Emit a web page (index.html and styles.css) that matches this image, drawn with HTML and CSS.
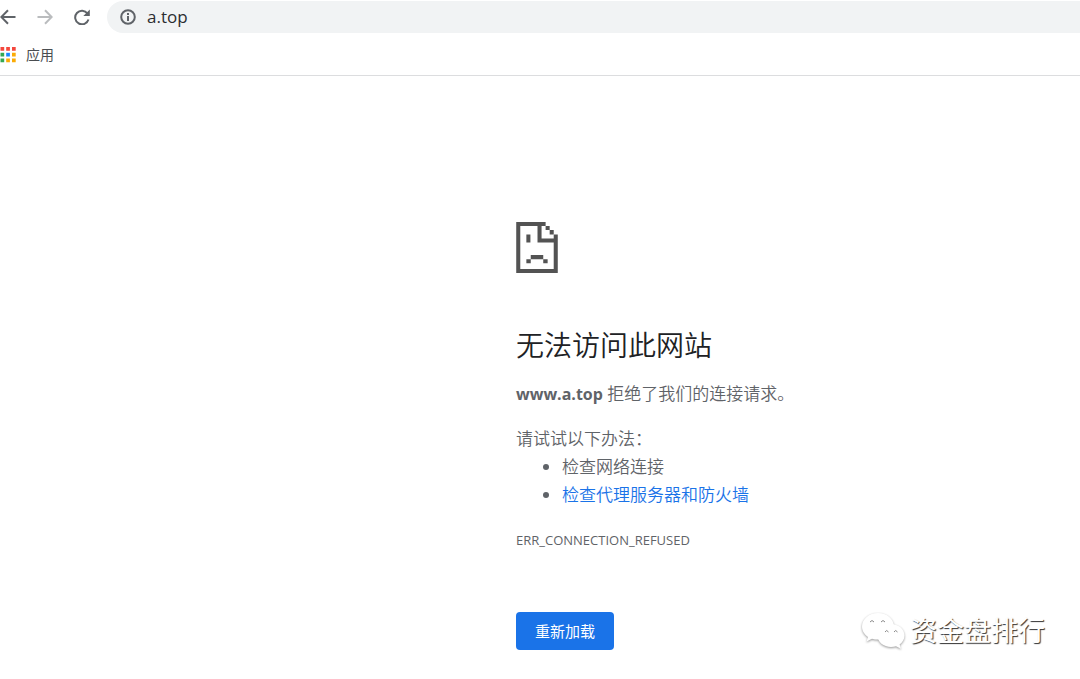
FILE: index.html
```html
<!DOCTYPE html>
<html lang="zh-CN">
<head>
<meta charset="utf-8">
<title>a.top</title>
<link rel="stylesheet" href="styles.css">
</head>
<body>
<header>
  <nav class="toolbar">
    <button class="tool back" type="button" aria-label="后退"><svg width="16" height="16" viewBox="0 0 16 16"><path d="M15.500 8H1.500M8 1.300 1.300 8 8 14.700"/></svg></button>
    <button class="tool forward" type="button" aria-label="前进"><svg width="16" height="16" viewBox="0 0 16 16"><path d="M.5 8h14M8 1.300 14.700 8 8 14.700"/></svg></button>
    <button class="tool" type="button" aria-label="刷新"><svg width="16" height="16" viewBox="0 0 16 16"><path d="M13.500 4.500A6.800 6.800 0 1 0 14.500 10.500"/><path class="solid" d="M15.800.6v6.500H9.300z"/></svg></button>
    <label class="address">
      <svg width="16" height="16" viewBox="0 0 16 16" aria-hidden="true"><circle cx="8" cy="8" r="6.800"/><path d="M8 7v5M8 4v2"/></svg>
      <input type="text" value="a.top" aria-label="地址栏">
    </label>
  </nav>
  <div class="bookmarks">
    <a class="apps" href="#">
      <svg width="16" height="16" viewBox="0 0 16 16" aria-hidden="true">
        <path fill="#f4473c" d="M.5 0h3.700v3.700H.5zM6.200 0h3.700v3.700H6.200zM12 0h3.700v3.700H12z"/>
        <path fill="#34a853" d="M.5 5.800h3.700v3.700H.5zM.5 11.600h3.700v3.700H.5z"/>
        <path fill="#1a88ff" d="M6.200 5.800h3.700v3.700H6.200z"/>
        <path fill="#fbab05" d="M12 5.800h3.700v3.700H12zM6.200 11.600h3.700v3.700H6.200zM12 11.600h3.700v3.700H12z"/>
      </svg>
      应用
    </a>
  </div>
</header>
<main>
  <svg class="sad" width="42" height="51" viewBox="0 0 123 151" aria-hidden="true">
    <path d="M0 0h87v12H75v37h36V37h12v114H0zM12 12v127h99V61H63V12z" fill-rule="evenodd"/>
    <path d="M87 12h12v12H87zM99 24h12v13H99zM30 37h12v24H30zM43 98h37v12H43zM30 110h13v12H30zM80 110h13v12H80z"/>
  </svg>
  <h1>无法访问此网站</h1>
  <p class="summary"><strong>www.a.top</strong> 拒绝了我们的连接请求。</p>
  <p class="hint">请试试以下办法：</p>
  <ul>
    <li>检查网络连接</li>
    <li><a href="#">检查代理服务器和防火墙</a></li>
  </ul>
  <p class="code">ERR_CONNECTION_REFUSED</p>
  <button class="reload" type="button">重新加载</button>
</main>
<aside class="watermark">
  <svg width="44" height="38" viewBox="0 0 44 38" aria-hidden="true">
    <path d="M17 1C8 1 1 7 1 14.500c0 4.500 2.500 8 6 10.500l-1.500 4.500 5.500-2.800c2 .6 4 .9 6 .9 9 0 16-5.500 16-13S26 1 17 1z"/>
    <path d="M30 12c-7.500 0-13.500 5-13.500 11.500S22.500 35 30 35c1.800 0 3.500-.3 5-.8l5 2.600-1.400-4.200c3-2.200 4.900-5.400 4.900-9.100C43.500 17 37.500 12 30 12z"/>
    <path class="eyes" d="M9 10q2-3 4 0M20 10q2-3 4 0M24 20q1.500-3 3.500 0M33 20q1.500-3 3.500 0"/>
  </svg>
  <span>资金盘排行</span>
</aside>
</body>
</html>
```
FILE: styles.css
```css
* { box-sizing: border-box; }
body {
  margin: 0;
  min-height: 100vh;
  position: relative;
  background: #fff;
  color: #5f6368;
  font-family: "Open Sans", "Noto Sans CJK SC", sans-serif;
  font-size: 17px;
  line-height: 28px;
}
header { border-bottom: 1px solid #dcdddf; }
.toolbar { display: flex; align-items: center; height: 34px; }
.tool {
  display: flex;
  width: 16px;
  height: 16px;
  margin-right: 21px;
  padding: 0;
  border: 0;
  background: none;
  color: #5f6368;
}
.tool svg, .address svg { fill: none; stroke: currentColor; stroke-width: 2; }
.tool .solid { fill: currentColor; stroke: none; }
.forward { color: #babcbe; }
.address {
  display: flex;
  flex: 1;
  align-items: center;
  gap: 11px;
  height: 32px;
  margin-left: -4px;
  padding-left: 13px;
  border-radius: 16px 0 0 16px;
  background: #f1f3f4;
}
.address input {
  flex: 1;
  min-width: 0;
  padding: 0;
  border: 0;
  outline: 0;
  background: none;
  color: #2b2d30;
  font: 17px/24px "Open Sans", sans-serif;
}
.bookmarks { display: flex; align-items: center; height: 41px; }
.apps {
  display: flex;
  align-items: center;
  gap: 10px;
  color: #4a4d51;
  font-size: 14px;
  text-decoration: none;
}
main { margin-left: 516px; padding-top: 146px; font-weight: 350; }
.sad { display: block; fill: #535353; }
h1 {
  margin: 51px 0 14px;
  color: #202124;
  font-size: 28px;
  font-weight: 350;
  line-height: 42px;
}
p { margin: 0; }
strong { font-size: 16px; font-weight: 700; }
.hint { margin-top: 17px; }
ul { margin: 0; padding-left: 46px; }
li a { color: #1a73e8; text-decoration: none; }
.code { margin-top: 17px; font-size: 13px; font-weight: 400; }
.reload {
  display: block;
  margin-top: 58px;
  padding: 8px 19px;
  border: 0;
  border-radius: 4px;
  background: #1a73e8;
  color: #fff;
  font: 15px/22px "Noto Sans CJK SC", sans-serif;
}
.watermark {
  display: flex;
  align-items: center;
  gap: 5px;
  position: absolute;
  right: 35px;
  bottom: 28px;
  color: #fff;
  font-size: 27px;
  line-height: 40px;
  text-shadow: 1px 1px 1px #333;
}
.watermark svg {
  fill: #fff;
  filter: drop-shadow(0 1px 1px #999);
}
.watermark .eyes { fill: none; stroke: #888; }
```
